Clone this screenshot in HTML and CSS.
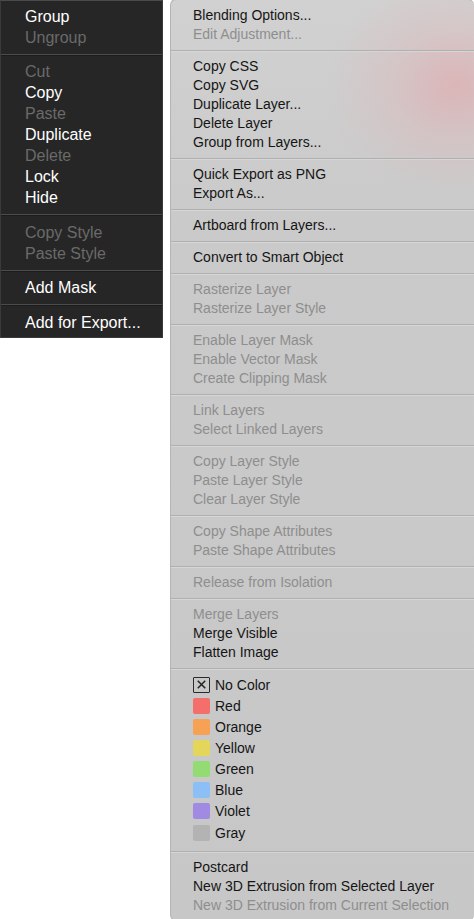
FILE: index.html
```html
<!DOCTYPE html>
<html>
<head>
<meta charset="utf-8">
<link rel="stylesheet" href="styles.css">
</head>
<body>
<div class="stage">
  <div class="dark-menu">
    <div class="ditem">Group</div>
    <div class="ditem off">Ungroup</div>
    <div class="dsep"></div>
    <div class="ditem off">Cut</div>
    <div class="ditem">Copy</div>
    <div class="ditem off">Paste</div>
    <div class="ditem">Duplicate</div>
    <div class="ditem off">Delete</div>
    <div class="ditem">Lock</div>
    <div class="ditem">Hide</div>
    <div class="dsep"></div>
    <div class="ditem off">Copy Style</div>
    <div class="ditem off">Paste Style</div>
    <div class="dsep"></div>
    <div class="ditem">Add Mask</div>
    <div class="dsep"></div>
    <div class="ditem">Add for Export...</div>
  </div>

  <div class="light-menu">
    <div class="item">Blending Options...</div>
    <div class="item off">Edit Adjustment...</div>
    <div class="sep"></div>
    <div class="item">Copy CSS</div>
    <div class="item">Copy SVG</div>
    <div class="item">Duplicate Layer...</div>
    <div class="item">Delete Layer</div>
    <div class="item">Group from Layers...</div>
    <div class="sep"></div>
    <div class="item">Quick Export as PNG</div>
    <div class="item">Export As...</div>
    <div class="sep"></div>
    <div class="item">Artboard from Layers...</div>
    <div class="sep"></div>
    <div class="item">Convert to Smart Object</div>
    <div class="sep"></div>
    <div class="item off">Rasterize Layer</div>
    <div class="item off">Rasterize Layer Style</div>
    <div class="sep"></div>
    <div class="item off">Enable Layer Mask</div>
    <div class="item off">Enable Vector Mask</div>
    <div class="item off">Create Clipping Mask</div>
    <div class="sep"></div>
    <div class="item off">Link Layers</div>
    <div class="item off">Select Linked Layers</div>
    <div class="sep"></div>
    <div class="item off">Copy Layer Style</div>
    <div class="item off">Paste Layer Style</div>
    <div class="item off">Clear Layer Style</div>
    <div class="sep"></div>
    <div class="item off">Copy Shape Attributes</div>
    <div class="item off">Paste Shape Attributes</div>
    <div class="sep"></div>
    <div class="item off">Release from Isolation</div>
    <div class="sep"></div>
    <div class="item off">Merge Layers</div>
    <div class="item">Merge Visible</div>
    <div class="item">Flatten Image</div>
    <div class="sep"></div>
    <div class="colors">
      <div class="citem"><span class="sw none"><svg viewBox="0 0 16 15" width="16" height="15"><path d="M4 3.5 L12 11.5 M12 3.5 L4 11.5" stroke="#222" stroke-width="1.6" fill="none"/></svg></span>No Color</div>
      <div class="citem"><span class="sw red"></span>Red</div>
      <div class="citem"><span class="sw orange"></span>Orange</div>
      <div class="citem"><span class="sw yellow"></span>Yellow</div>
      <div class="citem"><span class="sw green"></span>Green</div>
      <div class="citem"><span class="sw blue"></span>Blue</div>
      <div class="citem"><span class="sw violet"></span>Violet</div>
      <div class="citem"><span class="sw gray"></span>Gray</div>
    </div>
    <div class="sep"></div>
    <div class="item">Postcard</div>
    <div class="item">New 3D Extrusion from Selected Layer</div>
    <div class="item off">New 3D Extrusion from Current Selection</div>
  </div>
</div>
</body>
</html>
```

FILE: styles.css
```css
html, body {
  margin: 0;
  padding: 0;
  background: #ffffff;
}

body {
  width: 474px;
  height: 919px;
  overflow: hidden;
  font-family: "Liberation Sans", Arial, sans-serif;
}

.stage {
  display: flex;
  align-items: flex-start;
  gap: 7px;
}

/* dark menu */
.dark-menu {
  width: 163px;
  box-sizing: border-box;
  background: #262626;
  border: 1px solid #3a3a3a;
  border-top-color: #4a4a4a;
  padding: 4.5px 0 4.5px 0;
  flex: none;
}

.ditem {
  height: 21px;
  line-height: 21px;
  padding-left: 24px;
  font-size: 16px;
  color: #ffffff;
  white-space: nowrap;
}

.ditem.off {
  color: #6a6a6a;
}

.dsep {
  height: 1px;
  margin: 6px 0 6.5px;
  background: #4b4b4b;
  box-shadow: 0 1px 0 #1c1c1c;
}

/* light menu */
.light-menu {
  flex: 1;
  height: 922px;
  box-sizing: border-box;
  margin-top: -1px;
  padding-top: 6px;
  border: 1px solid #b4b4b4;
  border-right: none;
  border-radius: 6px;
  background:
    radial-gradient(ellipse 130px 110px at 285px 85px, rgba(235, 150, 155, 0.45) 0%, rgba(232, 165, 170, 0.22) 50%, rgba(220, 190, 192, 0) 100%),
    linear-gradient(180deg, #d1d1d1 0px, #cacaca 220px, #c7c7c7 919px);
  overflow: hidden;
}

.item {
  height: 19px;
  line-height: 19px;
  padding-left: 22px;
  font-size: 14px;
  color: #151515;
  white-space: nowrap;
}

.item.off {
  color: #8e8e8e;
}

.sep {
  height: 1px;
  margin: 6px 0 6px;
  background: #b0b0b0;
  box-shadow: 0 1px 0 #d6d6d6;
}

.colors {
  margin-top: -1px;
  padding-bottom: 2px;
}

.citem {
  height: 21.15px;
  display: flex;
  align-items: center;
  gap: 5px;
  padding-left: 22px;
  font-size: 14px;
  color: #151515;
  white-space: nowrap;
}

.sw {
  width: 17px;
  height: 16px;
  border-radius: 2px;
  box-sizing: border-box;
  flex: none;
  display: flex;
  align-items: center;
  justify-content: center;
}

.sw.none {
  border: 1.5px solid #2a2a2a;
  border-radius: 1px;
  background: transparent;
}

.sw.red { background: #f46f6c; }
.sw.orange { background: #f6a154; }
.sw.yellow { background: #e4d65b; }
.sw.green { background: #93db73; }
.sw.blue { background: #8bbff5; }
.sw.violet { background: #a18be2; }
.sw.gray { background: #b3b3b3; }
```
